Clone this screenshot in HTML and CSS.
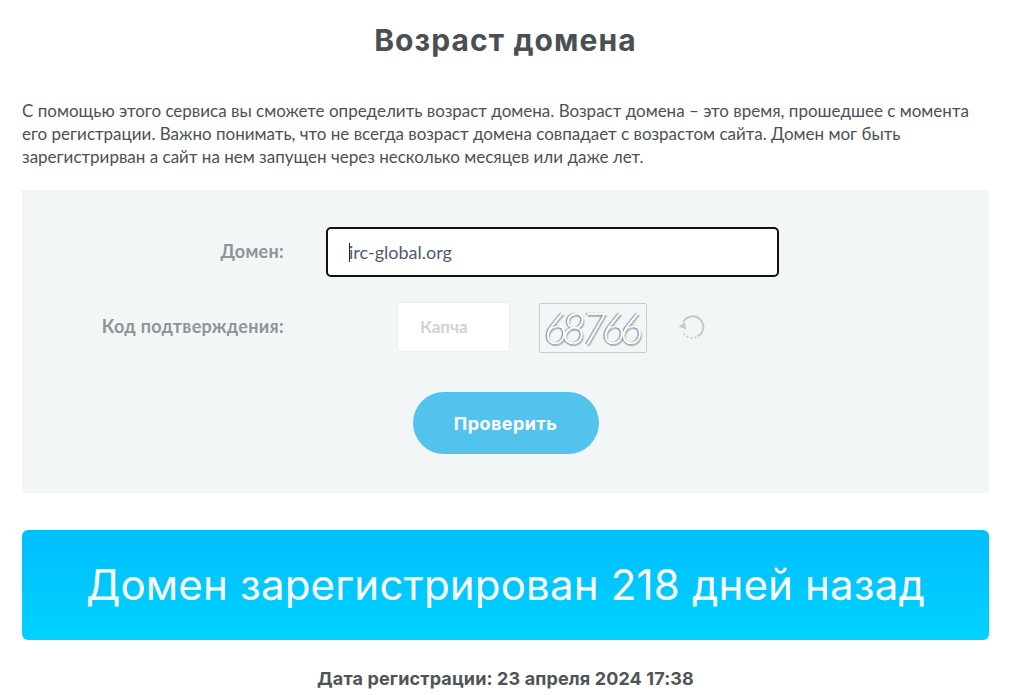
FILE: index.html
```html
<!DOCTYPE html>
<html lang="ru">
<head>
<meta charset="utf-8">
<title>Возраст домена</title>
<link rel="stylesheet" href="styles.css">
</head>
<body>
<main class="page">
  <h1 class="title">Возраст домена</h1>
  <p class="intro">С помощью этого сервиса вы сможете определить возраст домена. Возраст домена – это время, прошедшее с момента его регистрации. Важно понимать, что не всегда возраст домена совпадает с возрастом сайта. Домен мог быть зарегистрирван а сайт на нем запущен через несколько месяцев или даже лет.</p>
  <form class="panel">
    <div class="row row-domain">
      <label class="label">Домен:</label>
      <div class="domain-input"><span class="caret"></span>irc-global.org</div>
    </div>
    <div class="row row-captcha">
      <label class="label">Код подтверждения:</label>
      <div class="captcha-input">Капча</div>
      <div class="captcha-image"><span>68766</span></div>
      <svg class="reload" viewBox="0 0 28 28" width="28" height="28" aria-hidden="true">
        <path class="reload-arc" d="M6.2 8.2A10.6 10.6 0 1 1 20.5 22.4"/>
        <path class="reload-dots" d="M19 23.3A10.6 10.6 0 0 1 5.4 17"/>
        <path class="reload-head" d="M1.5 12.5L8 8.5L9 15.5Z"/>
      </svg>
    </div>
    <div class="row-submit"><button type="button" class="submit">Проверить</button></div>
  </form>
  <div class="result">Домен зарегистрирован 218 дней назад</div>
  <p class="date">Дата регистрации: 23 апреля 2024 17:38</p>
</main>
</body>
</html>
```
FILE: styles.css
```css
html, body { margin: 0; padding: 0; background: #fff; overflow: hidden; height: 695px; }
.page { width: 967px; margin-left: 22px; font-family: "Lato", "Open Sans", sans-serif; color: #4b5156; }
.title { margin: 0; padding-top: 21px; height: 38px; line-height: 38px; text-align: center; font-family: "Inter", sans-serif; font-size: 30px; font-weight: 700; letter-spacing: 1.1px; color: #4a4f54; }
.intro { margin: 40px 0 0; font-size: 17px; line-height: 23px; color: #4b5156; }
.panel { margin-top: 22px; height: 303px; background: #f3f6f7; box-sizing: border-box; padding-top: 37px; }
.row { display: flex; align-items: center; }
.label { width: 263px; box-sizing: border-box; padding: 0 1px 3px 0; text-align: right; font-size: 18px; letter-spacing: 0.3px; font-weight: 700; color: #8f9496; flex: none; }
.domain-input { margin-left: 41px; width: 453px; height: 50px; box-sizing: border-box; border: 2px solid #111; border-radius: 5px; background: #fff; padding-left: 21px; line-height: 46px; font-size: 18px; color: #4d5a70; position: relative; }
.caret { position: absolute; left: 21px; top: 14px; width: 1px; height: 19px; background: #222; }
.row-captcha { margin-top: 25px; align-items: flex-start; }
.row-captcha .label { align-self: center; }
.captcha-input { margin-left: 112px; width: 113px; height: 50px; box-sizing: border-box; border: 1px solid #eceff1; border-radius: 3px; background: #fff; padding-left: 22px; line-height: 48px; font-size: 17px; font-weight: 700; color: #cfd2d6; }
.captcha-image { margin: 1px 0 0 29px; width: 108px; height: 50px; box-sizing: border-box; border: 1px solid #c9cccd; border-radius: 2px; background: #f3f6f7; display: flex; align-items: center; justify-content: center; overflow: hidden; }
.captcha-image span { font-family: "Lato", sans-serif; font-style: italic; font-weight: 300; font-size: 43px; line-height: 46px; letter-spacing: -5px; padding-right: 5px; color: #fff; text-shadow: -1px 0 1px #777, 1px 2px 1px #aaa; }
.reload { margin: 12px 0 0 30px; flex: none; }
.reload-arc { fill: none; stroke: #c6cacc; stroke-width: 2; }
.reload-dots { fill: none; stroke: #c6cacc; stroke-width: 2; stroke-dasharray: 1.5 2.5; }
.reload-head { fill: #c6cacc; }
.row-submit { display: flex; justify-content: center; margin-top: 39px; }
.submit { width: 186px; height: 62px; border: 0; border-radius: 31px; background: #52c3ec; color: #fff; font-family: "Inter", sans-serif; font-size: 18px; letter-spacing: 0.45px; font-weight: 700; padding: 0; }
.result { margin-top: 37px; height: 110px; border-radius: 6px; background: linear-gradient(180deg, #00bdff, #00d2ff); color: #fff; text-align: center; line-height: 110px; font-family: "Inter", sans-serif; font-size: 42px; letter-spacing: 0.17px; font-weight: 400; }
.date { margin: 27px 0 0; text-align: center; font-family: "Inter", sans-serif; font-size: 18px; letter-spacing: 0.13px; font-weight: 700; line-height: 24px; color: #4f5459; }
```
